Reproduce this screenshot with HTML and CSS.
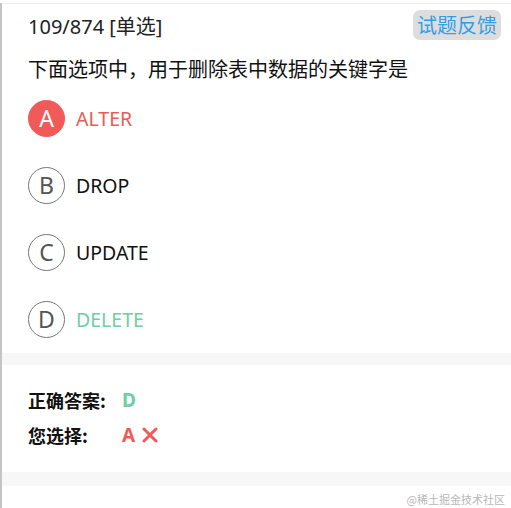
FILE: index.html
```html
<!DOCTYPE html>
<html lang="zh-CN">
<head>
    <meta charset="UTF-8">
    <meta name="viewport" content="width=device-width, initial-scale=1.0">
    <title>试题</title>
    <link rel="stylesheet" href="styles.css">
</head>
<body>
<div class="page">
    <div class="top-line"></div>

    <!-- 题目 -->
    <div class="card">
        <div class="head">
            <span class="num">109/874 [单选]</span>
            <button class="feedback">试题反馈</button>
        </div>
        <p class="question">下面选项中，用于删除表中数据的关键字是</p>
        <ul class="options">
            <li class="option wrong"><span class="letter">A</span><span class="text">ALTER</span></li>
            <li class="option"><span class="letter">B</span><span class="text">DROP</span></li>
            <li class="option"><span class="letter">C</span><span class="text">UPDATE</span></li>
            <li class="option right"><span class="letter">D</span><span class="text">DELETE</span></li>
        </ul>
    </div>

    <div class="band"></div>

    <!-- 答案 -->
    <div class="answer">
        <div class="row">
            <span class="label">正确答案:</span>
            <span class="value green">D</span>
        </div>
        <div class="row">
            <span class="label">您选择:</span>
            <span class="value red">A</span>
            <svg class="cross" width="16" height="16" viewBox="0 0 16 16">
                <path d="M2 2 L14 14 M14 2 L2 14" stroke="#f05a5a" stroke-width="3" stroke-linecap="round" fill="none"/>
            </svg>
        </div>
    </div>

    <div class="band band-last"></div>

    <div class="watermark">@稀土掘金技术社区</div>
</div>
</body>
</html>
```

FILE: styles.css
```css
html, body {
    margin: 0;
    padding: 0;
    background: #fff;
}
body {
    font-family: "Noto Sans", "Noto Sans CJK SC", sans-serif;
    color: #222;
}
.page {
    position: relative;
    min-height: 508px;
    border-left: 2px solid #c4c4c4;
    box-sizing: border-box;
}
.top-line {
    margin-top: 3px;
    height: 1px;
    background: #eeeeee;
}
.card {
    padding: 6px 10px 16px 26px;
}
.head {
    display: flex;
    justify-content: space-between;
    align-items: center;
}
.num {
    font-size: 20px;
    line-height: 26px;
    color: #222;
    padding-top: 3px;
}
.feedback {
    background: #dddddd;
    color: #2f9fe6;
    border: none;
    border-radius: 7px;
    height: 30px;
    padding: 0 4px;
    font-family: "Noto Sans CJK SC", sans-serif;
    font-size: 20px;
    line-height: 30px;
    cursor: pointer;
}
.question {
    margin: 16px 0 16px;
    font-size: 20px;
    line-height: 28px;
    color: #111;
}
.options {
    list-style: none;
    margin: 0;
    padding: 0;
}
.option {
    display: flex;
    align-items: center;
    height: 36px;
    margin-bottom: 31px;
}
.option:last-child {
    margin-bottom: 0;
}
.letter {
    width: 35px;
    height: 35px;
    border: 1px solid #777;
    border-radius: 50%;
    display: flex;
    align-items: center;
    justify-content: center;
    font-size: 23px;
    color: #555;
}
.text {
    margin-left: 11px;
    font-size: 19.5px;
    color: #111;
}
.wrong .letter {
    background: #f25a5a;
    border-color: #f25a5a;
    color: #fff;
}
.wrong .text {
    color: #ec5a56;
}
.right .text {
    color: #6dcfa5;
}
.band {
    height: 12px;
    background: #f7f7f7;
}
.band-last {
    height: 14px;
}
.answer {
    padding: 23px 10px 25px 26px;
}
.row {
    display: flex;
    align-items: center;
    height: 24px;
    margin-bottom: 11px;
}
.row:last-child {
    margin-bottom: 0;
}
.label {
    width: 94px;
    font-family: "Noto Sans CJK SC", sans-serif;
    font-size: 18px;
    font-weight: bold;
    color: #111;
}
.value {
    font-family: "Noto Sans", sans-serif;
    font-size: 19px;
    font-weight: bold;
}
.green {
    color: #6dcfa5;
}
.red {
    color: #f05a5a;
}
.cross {
    margin-left: 7px;
}
.watermark {
    position: absolute;
    right: 6px;
    bottom: 4px;
    font-family: "Noto Sans CJK SC", sans-serif;
    font-size: 11px;
    color: #b8b8b8;
}
```
